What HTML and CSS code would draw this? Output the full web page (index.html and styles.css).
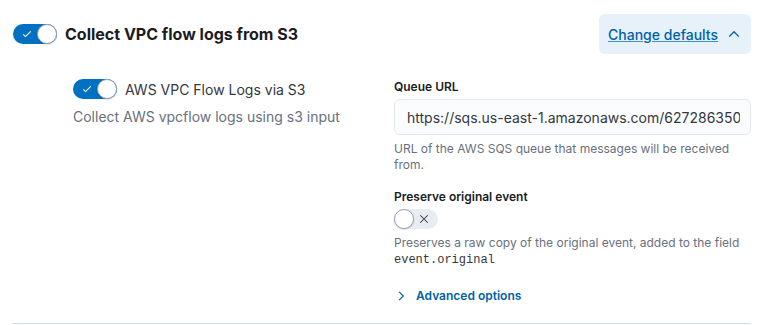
FILE: index.html
```html
<!DOCTYPE html>
<html lang="en">

<head>
    <meta charset="UTF-8">
    <title>Collect VPC flow logs from S3</title>
    <link rel="stylesheet" href="styles.css">
</head>

<body>

    <div class="panel">
        <div class="header">
            <div class="header-left">
                <span class="switch on">
                    <span class="track">
                        <svg class="mark" width="12" height="12" viewBox="0 0 16 16">
                            <path d="M3 8.5l3 3 7-7" fill="none" stroke="#fff" stroke-width="1.4" />
                        </svg>
                    </span>
                    <span class="knob"></span>
                </span>
                <h2 class="title">Collect VPC flow logs from S3</h2>
            </div>
            <button class="defaults-btn">
                <span class="link">Change defaults</span>
                <svg width="14" height="14" viewBox="0 0 16 16">
                    <path d="M2.5 11l5.5-5.5 5.5 5.5" fill="none" stroke="#0061a6" stroke-width="1.6" />
                </svg>
            </button>
        </div>

        <div class="body">
            <div class="input-col">
                <div class="input-row">
                    <span class="switch on">
                        <span class="track">
                            <svg class="mark" width="12" height="12" viewBox="0 0 16 16">
                                <path d="M3 8.5l3 3 7-7" fill="none" stroke="#fff" stroke-width="1.4" />
                            </svg>
                        </span>
                        <span class="knob"></span>
                    </span>
                    <span class="input-name">AWS VPC Flow Logs via S3</span>
                </div>
                <p class="input-desc">Collect AWS vpcflow logs using s3 input</p>
            </div>

            <div class="fields">
                <div class="field">
                    <label class="label" for="queue-url">Queue URL</label>
                    <input class="text-input" id="queue-url" type="text" value="https://sqs.us-east-1.amazonaws.com/627286350134/">
                    <div class="help">URL of the AWS SQS queue that messages will be received from.</div>
                </div>

                <div class="field">
                    <label class="label">Preserve original event</label>
                    <span class="switch off">
                        <span class="track">
                            <svg class="mark" width="12" height="12" viewBox="0 0 16 16">
                                <path d="M3 3l10 10M13 3l-10 10" fill="none" stroke="#343741" stroke-width="1.4" />
                            </svg>
                        </span>
                        <span class="knob"></span>
                    </span>
                    <div class="help">Preserves a raw copy of the original event, added to the field <code>event.original</code></div>
                </div>

                <div class="advanced">
                    <svg width="12" height="12" viewBox="0 0 16 16">
                        <path d="M5.5 2.5l5.5 5.5-5.5 5.5" fill="none" stroke="#0061a6" stroke-width="1.6" />
                    </svg>
                    <span>Advanced options</span>
                </div>
            </div>
        </div>
    </div>

</body>

</html>
```

FILE: styles.css
```css
body {
    margin: 0;
    font-family: Inter, 'Noto Sans', sans-serif;
    color: #343741;
    background-color: #fff;
}

.panel {
    margin: 0 24px 0 13px;
    padding-top: 14px;
    padding-bottom: 20px;
    border-bottom: 1px solid #d3dae6;
}

.header {
    display: flex;
    justify-content: space-between;
    align-items: center;
}

.header-left {
    display: flex;
    align-items: center;
    gap: 8px;
}

.title {
    margin: 0;
    font-size: 16px;
    font-weight: 700;
    color: #1a1c21;
}

.defaults-btn {
    display: flex;
    align-items: center;
    gap: 9px;
    height: 40px;
    padding: 0 10px 0 9px;
    border: none;
    border-radius: 6px;
    background-color: #e6f1fa;
    font-family: inherit;
    font-size: 14px;
    font-weight: 500;
}

.defaults-btn .link {
    color: #0061a6;
    text-decoration: underline;
    text-decoration-color: #3d8fd1;
}

/* switches */
.switch {
    position: relative;
    display: inline-block;
    width: 44px;
    height: 20px;
    flex-shrink: 0;
}

.switch .track {
    display: flex;
    align-items: center;
    height: 100%;
    border-radius: 10px;
    background-color: #0071c2;
}

.switch .mark {
    margin-left: 8px;
}

.switch .knob {
    position: absolute;
    top: 0;
    right: 0;
    width: 20px;
    height: 20px;
    box-sizing: border-box;
    border-radius: 50%;
    background-color: #fff;
    border: 1px solid #98a2b3;
    box-shadow: 0 1px 2px rgba(0, 0, 0, 0.15);
}

.switch.off .track {
    background-color: #e9edf3;
    justify-content: flex-end;
}

.switch.off .mark {
    margin: 0 8px 0 0;
}

.switch.off .knob {
    left: 0;
    right: auto;
}

/* body */
.body {
    display: grid;
    grid-template-columns: 381px minmax(0, 1fr);
    margin-top: 25px;
}

.input-col {
    padding-left: 60px;
}

.input-row {
    display: flex;
    align-items: center;
    gap: 8px;
}

.input-name {
    font-size: 14px;
}

.input-desc {
    margin: 9px 0 0;
    font-size: 14px;
    color: #69707d;
}

.field {
    margin-bottom: 16px;
}

.label {
    display: block;
    margin-bottom: 5px;
    font-size: 12px;
    font-weight: 600;
    color: #1a1c21;
}

.text-input {
    display: block;
    width: 100%;
    height: 36px;
    box-sizing: border-box;
    margin: 0;
    padding: 0 10px 0 12px;
    border: 1px solid #e3e8f0;
    border-radius: 6px;
    background-color: #fbfcfd;
    font-family: inherit;
    font-size: 14px;
    color: #343741;
    outline: none;
}

.help {
    margin-top: 6px;
    font-size: 12px;
    line-height: 16px;
    color: #69707d;
}

.help code {
    font-family: 'Liberation Mono', monospace;
    font-size: 12px;
    color: #343741;
}

.advanced {
    display: flex;
    align-items: center;
    gap: 9px;
    margin-top: 20px;
    padding-left: 1px;
    font-size: 12px;
    font-weight: 600;
    color: #0061a6;
}
```
